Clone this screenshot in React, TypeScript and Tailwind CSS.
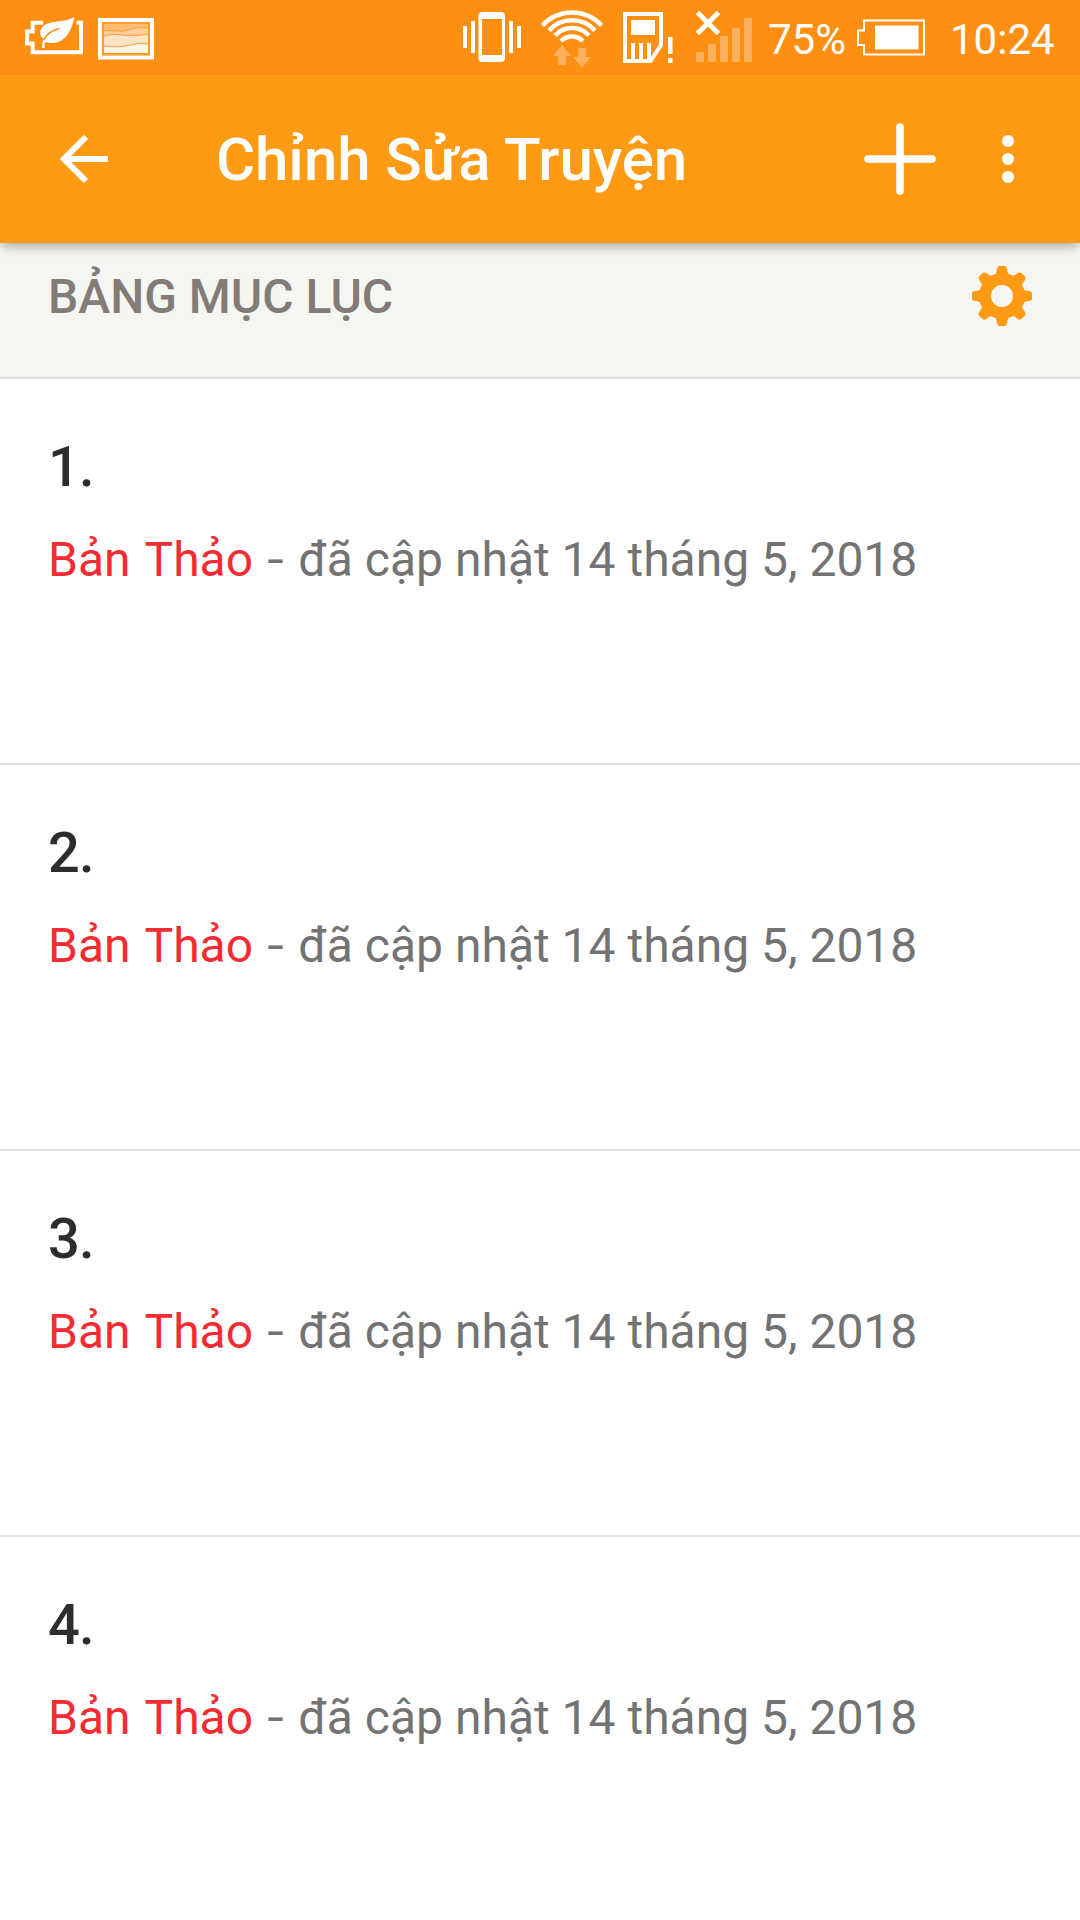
const chapters = [
  { id: 1, updated: "14 tháng 5, 2018" },
  { id: 2, updated: "14 tháng 5, 2018" },
  { id: 3, updated: "14 tháng 5, 2018" },
  { id: 4, updated: "14 tháng 5, 2018" },
];

function PowerSaverIcon() {
  return (
    <svg width="60" height="75" viewBox="0 0 60 75" fill="none">
      <path
        d="M18 22.7H7.7V31.5H2V43.5H7.7V52.3H56V22.7H51.5"
        stroke="#fff"
        strokeWidth="4"
      />
      <path
        d="M49.5 17C46 33 39 43 27 43C24 43 22 42.5 20.5 42C19.6 44 19.5 45.5 19.5 48H17C17 44 17.5 41 18.5 39C14.500 36 14 31 17.500 27C24 19.500 38 23.500 49.500 17Z"
        fill="#fff"
      />
      <path d="M18.5 40C22 33 28 30 34.5 28.5" stroke="#ff8f12" strokeWidth="1.6" />
    </svg>
  );
}

function PictureIcon() {
  return (
    <svg width="56" height="75" viewBox="0 0 56 75" fill="none">
      <path d="M6 24H50V53H6Z" fill="#ffbc72" />
      <path d="M6 31Q14 30 20 31T34 29T50 28V53H6Z" fill="#ffcd96" />
      <path d="M6 36Q14 33 24 35T50 34V53H6Z" fill="#ffe3c6" />
      <path d="M6 46Q22 48 32 45T50 44V53H6Z" fill="#fff3e6" />
      <path
        d="M6 31Q14 30 20 31T34 29T50 28M6 36Q14 33 24 35T50 34M6 46Q22 48 32 45T50 44"
        stroke="#f5a04a"
        strokeWidth="1"
      />
      <rect x="5" y="23" width="46" height="31.5" stroke="#ff9a2c" strokeWidth="2" />
      <rect x="2" y="20" width="52" height="37.5" stroke="#fff" strokeWidth="4" />
    </svg>
  );
}

function VibrateIcon() {
  return (
    <svg width="58" height="75" viewBox="0 0 58 75" fill="#fff">
      <rect y="26" width="4" height="22" />
      <rect x="8" y="21" width="4" height="32" />
      <path
        fillRule="evenodd"
        d="M19 12H38Q42 12 42 16V58Q42 62 38 62H19Q15.5 62 15.5 58V16Q15.5 12 19 12ZM19 19V55H39V19Z"
      />
      <rect x="46" y="21" width="4" height="32" />
      <rect x="54" y="26" width="4" height="22" />
    </svg>
  );
}

function WifiIcon() {
  return (
    <svg width="62" height="75" viewBox="0 0 62 75" fill="none">
      <path
        d="M1.5 25.5A40 40 0 0 1 60.5 25.5M8 30.5A31 31 0 0 1 54 30.5M14 35.5A23 23 0 0 1 48 35.5M20 41A15.5 15.5 0 0 1 42 41"
        stroke="#fff"
        strokeWidth="4.5"
      />
      <path d="M21 45L30 56H25V65H17V56H12ZM37 48H45V57H50L41 68L32 57H37Z" fill="#ffb05c" />
    </svg>
  );
}

function SimIcon() {
  return (
    <svg width="50" height="75" viewBox="0 0 50 75" fill="#fff">
      <path d="M2 14H38V45L27.5 61H2Z" fill="none" stroke="#fff" strokeWidth="4" />
      <rect x="8" y="20" width="24" height="15" />
      <path d="M8 43H12V60H8ZM16 43H20V60H16ZM24 43H28V60H24Z" />
      <rect x="45" y="37" width="4.5" height="17" />
      <rect x="45" y="58" width="4.5" height="5" />
    </svg>
  );
}

function SignalIcon() {
  return (
    <svg width="56" height="75" viewBox="0 0 56 75" fill="#ffb05c">
      <path d="M0 52H8V62H0ZM12 44H20V62H12ZM24 36H32V62H24ZM36 28H44V62H36ZM48 18H56V62H48Z" />
      <path d="M1.5 12.5L22.5 33.5M22.5 12.5L1.5 33.5" stroke="#fff" strokeWidth="4.8" />
    </svg>
  );
}

function BatteryIcon() {
  return (
    <svg width="68" height="75" viewBox="0 0 68 75" fill="none">
      <path d="M7 20.5H67V54.5H7V45H1V30.5H7Z" stroke="#fff" strokeWidth="2" />
      <rect x="18" y="25.5" width="43.5" height="24" fill="#fff" />
    </svg>
  );
}

function GearIcon() {
  return (
    <svg width="60" height="60" viewBox="-30 -30 60 60" fill="#ff9a14">
      <circle r="17" fill="none" stroke="#ff9a14" strokeWidth="12" />
      {[0, 45, 90, 135, 180, 225, 270, 315].map((angle) => (
        <path
          key={angle}
          transform={`rotate(${angle})`}
          d="M-7.5 -20.5Q-5.5 -22 -5 -27Q-4.5 -30 -2.5 -30H2.5Q4.5 -30 5 -27Q5.5 -22 7.5 -20.5Z"
        />
      ))}
    </svg>
  );
}

function StatusBar() {
  return (
    <div className="flex h-[75px] items-center bg-[#ff8f12] pl-[25px] text-[42px] leading-none text-white">
      <PowerSaverIcon />
      <div className="ml-[13px]">
        <PictureIcon />
      </div>
      <div className="ml-[309px] flex gap-5">
        <VibrateIcon />
        <WifiIcon />
        <SimIcon />
      </div>
      <div className="ml-[23px]">
        <SignalIcon />
      </div>
      <span className="ml-4 w-[89px] whitespace-nowrap pt-1">75%</span>
      <BatteryIcon />
      <span className="ml-[25px] whitespace-nowrap pt-1">10:24</span>
    </div>
  );
}

function AppBar() {
  return (
    <header className="relative z-10 flex h-[168px] items-center bg-[#ff9a14] pl-[60px] text-white shadow-[0_6px_10px_-2px_rgba(0,0,0,0.3)]">
      <button>
        <svg width="48" height="48" viewBox="0 0 48 48" fill="none" stroke="#fff" strokeWidth="6">
          <path d="M48 24H6M26 2L4 24L26 46" />
        </svg>
      </button>
      <h1 className="ml-[108px] w-[648px] whitespace-nowrap pt-0.5 text-[60px] font-medium leading-none tracking-[-0.08px]">
        Chỉnh Sửa Truyện
      </h1>
      <button>
        <svg width="72" height="72" viewBox="0 0 72 72" stroke="#fff" strokeWidth="7.5" strokeLinecap="round">
          <path d="M36 4V68M4 36H68" />
        </svg>
      </button>
      <button className="ml-[66px] flex flex-col gap-1.5">
        <span className="size-3 rounded-full bg-white" />
        <span className="size-3 rounded-full bg-white" />
        <span className="size-3 rounded-full bg-white" />
      </button>
    </header>
  );
}

function ChapterRow({ id, updated }: { id: number; updated: string }) {
  return (
    <li className="h-[386px] border-b-2 border-[#dfdfdf] px-12 pt-[58px]">
      <h3 className="text-[56px] font-medium leading-[60px] tracking-[-0.8px] text-[#2d2d2d]">{id}.</h3>
      <p className="mt-[35px] whitespace-nowrap text-[48px] leading-[56px] text-[#737373]">
        <span className="text-[#f42b33] [word-spacing:3px]">Bản Thảo</span>{" "}
        <span className="mx-1 inline-block scale-x-125">-</span> đã cập nhật {updated}
      </p>
    </li>
  );
}

export default function App() {
  return (
    <div className="h-[1920px] w-[1080px] overflow-hidden bg-white font-['Roboto',sans-serif]">
      <StatusBar />
      <AppBar />
      <div className="flex h-[136px] items-start justify-between border-b-2 border-[#dcdedc] bg-[#f5f6f1] pl-12 pr-12 pt-[23px]">
        <h2 className="pt-px text-[48px] font-medium leading-[60px] text-[#827b77]">BẢNG MỤC LỤC</h2>
        <GearIcon />
      </div>
      <ul>
        {chapters.map((chapter) => (
          <ChapterRow key={chapter.id} {...chapter} />
        ))}
      </ul>
    </div>
  );
}
